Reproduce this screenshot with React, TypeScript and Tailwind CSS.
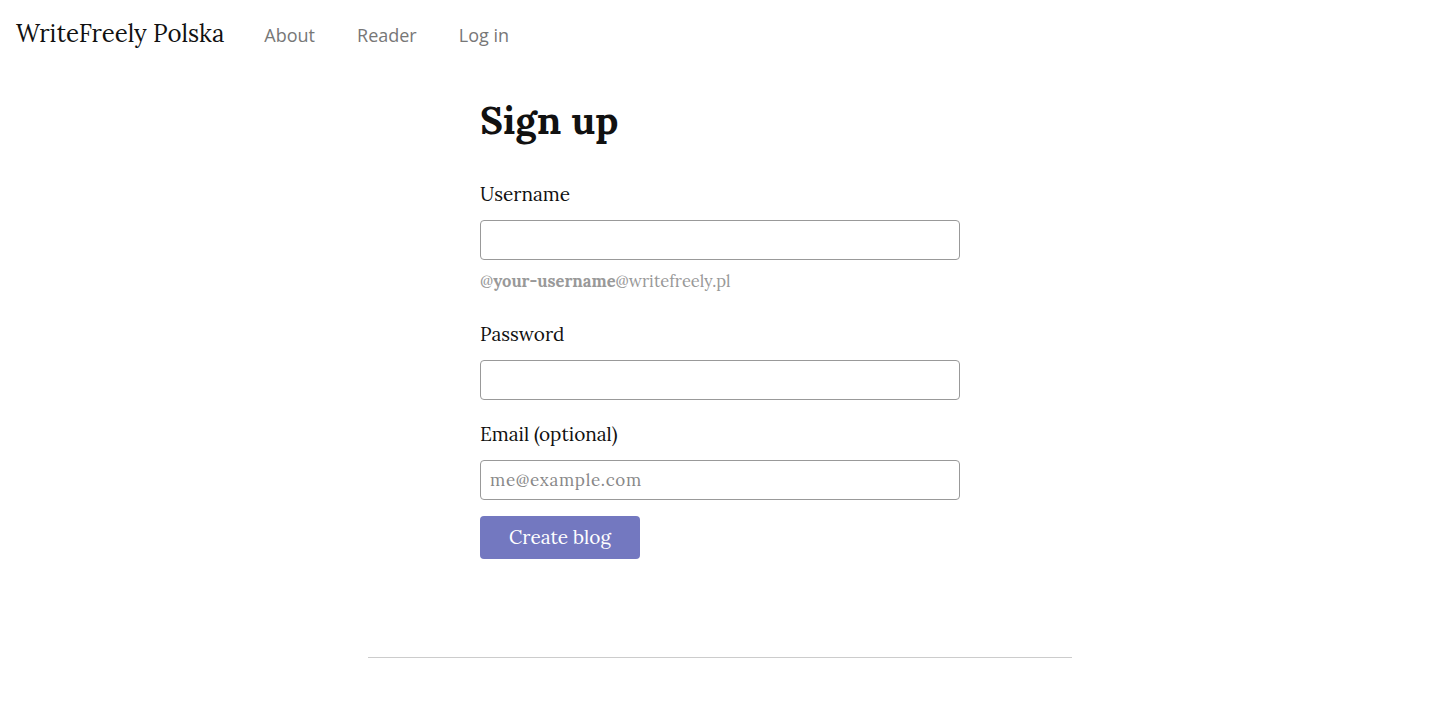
const serif = "font-['Lora','Liberation_Serif','DejaVu_Serif',serif]";

const Field = ({ label, placeholder = '', type = 'text' }: { label: string; placeholder?: string; type?: string }) => (
    <div>
        <label className="block text-[19px] leading-[28px] text-[#111]">{label}</label>
        <input
            type={type}
            placeholder={placeholder}
            className={`mt-[12px] block w-full h-[40px] rounded-[4px] border border-[#999] bg-white px-[9px] text-[17px] tracking-[0.04em] placeholder:text-[#888] outline-none ${serif}`}
        />
    </div>
);

export default function App() {
    return (
        <div className={`min-h-[707px] bg-white text-[#111] ${serif}`}>
            <header className="flex items-center h-[70px] px-[16px]">
                <h1 className="text-[24px] leading-none text-[#111] mr-[40px] -mt-[2px]">WriteFreely Polska</h1>
                <nav className="flex gap-[42px] font-['Open_Sans',sans-serif] text-[18px] text-[#777]">
                    <a href="#">About</a>
                    <a href="#">Reader</a>
                    <a href="#">Log in</a>
                </nav>
            </header>

            <main className="w-[480px] mx-auto">
                <h2 className="mt-[27px] text-[38.5px] font-bold leading-[46px]">Sign up</h2>

                <form className="mt-[37px]">
                    <Field label="Username" />
                    <p className="mt-[9px] text-[16.5px] text-[#999]">
                        @<strong className="font-bold">your-username</strong>@writefreely.pl
                    </p>

                    <div className="mt-[26px]">
                        <Field label="Password" type="password" />
                    </div>

                    <div className="mt-[20px]">
                        <Field label="Email (optional)" placeholder="me@example.com" />
                    </div>

                    <button
                        type="button"
                        className="mt-[16px] w-[160px] h-[43px] rounded-[4px] bg-[#7378c0] text-white text-[19px]"
                    >
                        Create blog
                    </button>
                </form>
            </main>

            <hr className="w-[704px] mx-auto mt-[98px] border-0 border-t border-[#ccc]" />
        </div>
    );
}
